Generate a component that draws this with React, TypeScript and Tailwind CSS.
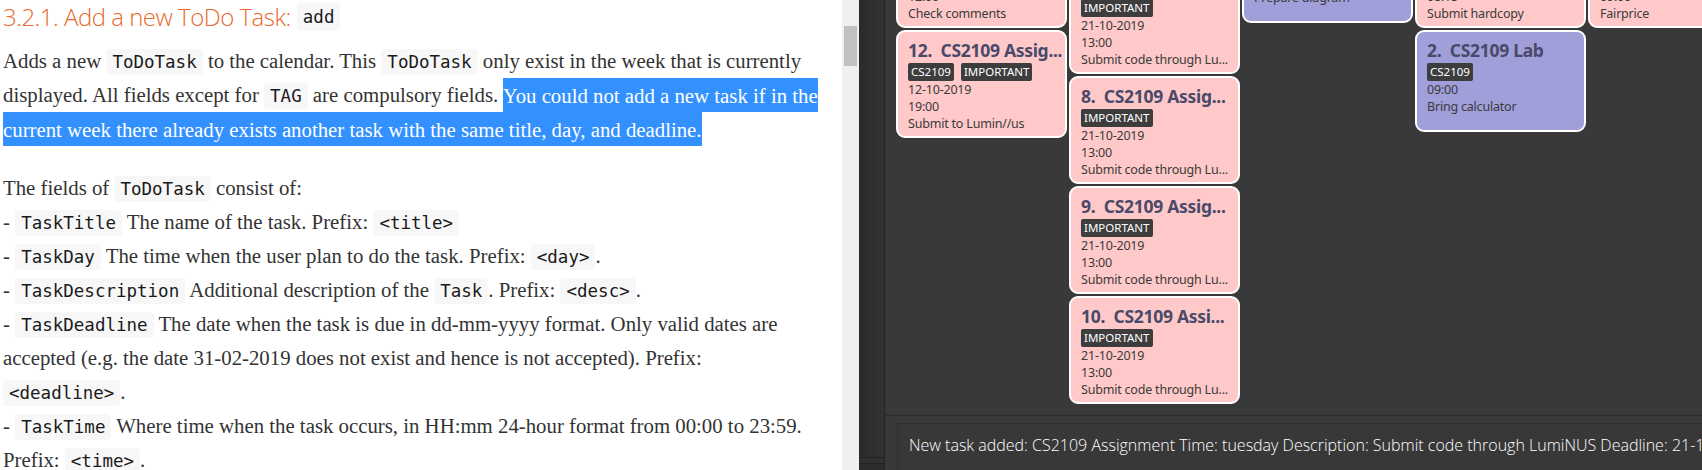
import React from "react";

const serif = "font-['Liberation_Serif','Times_New_Roman',serif]";

function Code({ children }: { children: React.ReactNode }) {
  return (
    <code className="rounded-[4px] bg-[#f7f7f8] px-[6px] py-[3px] font-['DejaVu_Sans_Mono',monospace] text-[17.5px] leading-none text-[#1a1a1a]">
      {children}
    </code>
  );
}

function Sel({ children }: { children: React.ReactNode }) {
  return (
    <span className="bg-[#3390ff] py-[5.5px] leading-none text-white [box-decoration-break:clone]">
      {children}
    </span>
  );
}

interface CardProps {
  color: "pink" | "purple";
  title: string;
  tags: string[];
  lines: string[];
  height: string;
  cut?: string;
}

function TaskCard({ color, title, tags, lines, height, cut }: CardProps) {
  const bg = color === "pink" ? "bg-[#ffc9c9]" : "bg-[#a09fda]";
  return (
    <div
      className={`${bg} ${height} ${cut ?? ""} box-border w-[171px] shrink-0 overflow-hidden rounded-[9px] border-2 border-white pl-[10px] pr-[4px] pt-[5px] font-['Noto_Sans',sans-serif]`}
    >
      <div className="h-[26px] whitespace-pre text-[17.5px] font-bold leading-[26px] tracking-[-0.3px] text-[#494a69]">
        {title}
      </div>
      <div className="flex h-[18px] gap-[7px]">
        {tags.map((t) => (
          <span
            key={t}
            className="flex h-[18px] items-center rounded-[2px] bg-[#3d3d3d] px-[3px] text-[11.5px] text-white"
          >
            {t}
          </span>
        ))}
      </div>
      {lines.map((l, i) => (
        <div
          key={i}
          className="h-[17px] whitespace-nowrap text-[12.5px] leading-[17px] tracking-[-0.2px] text-[#3a3a3a]"
        >
          {l}
        </div>
      ))}
    </div>
  );
}

const assign = "CS2109 Assig...";
const lu = "Submit code through Lu...";

export default function App() {
  return (
    <div className="flex h-[470px] w-[1702px] overflow-hidden">
      {/* Docs page */}
      <div className={`w-[842px] shrink-0 bg-white pl-[3px] ${serif} text-[20.8px] leading-[34px] text-[#333]`}>
        <div className="flex h-[34px] items-center whitespace-nowrap font-['Open_Sans',sans-serif] text-[24px] font-light tracking-[-0.5px] text-[#e8692a]">
          <span>3.2.1. Add a new ToDo Task:</span>
          <span className="ml-[6px] rounded-[4px] bg-[#f7f7f8] px-[6px] font-['DejaVu_Sans_Mono',monospace] text-[17.5px] leading-[28px] tracking-normal text-[#1a1a1a]">
            add
          </span>
        </div>

        <p className="mt-[10px] whitespace-nowrap">
          Adds a new <Code>ToDoTask</Code> to the calendar. This <Code>ToDoTask</Code> only exist in the week that is currently
          <br />
          displayed. All fields except for <Code>TAG</Code> are compulsory fields.{" "}
          <Sel>You could not add a new task if in the</Sel>
          <br />
          <Sel>current week there already exists another task with the same title, day, and deadline.</Sel>
        </p>

        <p className="mt-[25px] whitespace-nowrap">
          The fields of <Code>ToDoTask</Code> consist of:
          <br />- <Code>TaskTitle</Code> The name of the task. Prefix: <Code>&lt;title&gt;</Code>
          <br />- <Code>TaskDay</Code> The time when the user plan to do the task. Prefix: <Code>&lt;day&gt;</Code>.
          <br />- <Code>TaskDescription</Code> Additional description of the <Code>Task</Code>. Prefix: <Code>&lt;desc&gt;</Code>.
          <br />- <Code>TaskDeadline</Code> The date when the task is due in dd-mm-yyyy format. Only valid dates are
          <br />
          accepted (e.g. the date 31-02-2019 does not exist and hence is not accepted). Prefix:
          <br />
          <Code>&lt;deadline&gt;</Code>.
          <br />- <Code>TaskTime</Code> Where time when the task occurs, in HH:mm 24-hour format from 00:00 to 23:59.
          <br />
          Prefix: <Code>&lt;time&gt;</Code>.
        </p>
      </div>

      {/* Scrollbar */}
      <div className="w-[17px] shrink-0 bg-[#f0f0f0] px-[2px] pt-[26px]">
        <div className="h-[40px] bg-[#c1c1c1]" />
      </div>

      {/* Side strip */}
      <div className="flex w-[26px] shrink-0 flex-col border-r border-[#242424] bg-[#2e2e2e]">
        <div className="h-[457px] bg-gradient-to-r from-[#2a2a2a] to-[#333333]" />
        <div className="h-[1px] bg-[#232323]" />
        <div className="h-[5px] bg-[#303030]" />
        <div className="h-[1px] bg-[#232323]" />
        <div className="flex-1 bg-[#2c2c2c]" />
      </div>

      {/* App */}
      <div className="flex min-w-0 flex-1 flex-col bg-[#393939]">
        <div className="flex h-[415px] gap-[2px] overflow-hidden pl-[11px]">
          <div className="flex w-[171px] shrink-0 flex-col gap-[2px]">
            <TaskCard color="pink" cut="-mt-[80px]" height="h-[108px]" title="11.  CS2103 Revi..." tags={["CS2103"]} lines={["11-10-2019", "12:00", "Check comments"]} />
            <TaskCard color="pink" height="h-[108px]" title={`12.  ${assign}`} tags={["CS2109", "IMPORTANT"]} lines={["12-10-2019", "19:00", "Submit to Lumin//us"]} />
          </div>
          <div className="flex w-[171px] shrink-0 flex-col gap-[2px]">
            <TaskCard color="pink" cut="-mt-[34px]" height="h-[108px]" title={`7.  ${assign}`} tags={["IMPORTANT"]} lines={["21-10-2019", "13:00", lu]} />
            <TaskCard color="pink" height="h-[108px]" title={`8.  ${assign}`} tags={["IMPORTANT"]} lines={["21-10-2019", "13:00", lu]} />
            <TaskCard color="pink" height="h-[108px]" title={`9.  ${assign}`} tags={["IMPORTANT"]} lines={["21-10-2019", "13:00", lu]} />
            <TaskCard color="pink" height="h-[108px]" title="10.  CS2109 Assi..." tags={["IMPORTANT"]} lines={["21-10-2019", "13:00", lu]} />
          </div>
          <div className="flex w-[171px] shrink-0 flex-col gap-[2px]">
            <TaskCard color="purple" cut="-mt-[79px]" height="h-[102px]" title="4.  CS2101 Pres..." tags={["CS2101"]} lines={["14:00", "Prepare diagram"]} />
          </div>
          <div className="flex w-[171px] shrink-0 flex-col gap-[2px]">
            <TaskCard color="pink" cut="-mt-[80px]" height="h-[108px]" title="5.  CS2100 Tuto..." tags={["CS2100"]} lines={["18-10-2019", "08:15", "Submit hardcopy"]} />
            <TaskCard color="purple" height="h-[102px]" title="2.  CS2109 Lab" tags={["CS2109"]} lines={["09:00", "Bring calculator"]} />
          </div>
          <div className="flex w-[171px] shrink-0 flex-col gap-[2px]">
            <TaskCard color="pink" cut="-mt-[80px]" height="h-[108px]" title="6.  Groceries" tags={["HOME"]} lines={["19-10-2019", "09:00", "Fairprice"]} />
          </div>
        </div>
        <div className="flex-1 border-t border-[#2b2b2b] pl-[12px] pt-[7px]">
          <div className="h-full border-l border-t border-[#2e2e2e] bg-[#383838] pl-[11px] pt-[9px] font-['Open_Sans',sans-serif] text-[16px] font-light whitespace-nowrap text-white">
            New task added: CS2109 Assignment Time: tuesday Description: Submit code through LumiNUS Deadline: 21-10-2019
          </div>
        </div>
      </div>
    </div>
  );
}
